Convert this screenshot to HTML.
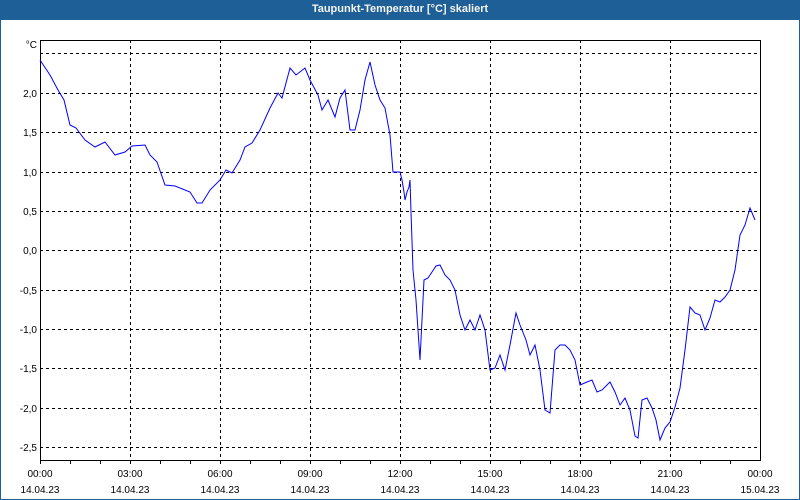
<!DOCTYPE html>
<html><head><meta charset="utf-8"><style>
body{margin:0;width:800px;height:500px;overflow:hidden;background:#fff;font-family:"Liberation Sans",sans-serif}
#t{position:absolute;left:0;top:0;width:800px;height:20px;background:#1d5f96;color:#f4f4f4;font-weight:bold;font-size:11px;line-height:19px;text-align:center}
#b{position:absolute;left:0;top:0;width:798px;height:498px;border:1px solid #1d5f96}
svg{position:absolute;left:0;top:0}
text{font-family:"Liberation Sans",sans-serif;font-size:10px;fill:#000}
</style></head><body>
<div id="b"></div>
<svg width="800" height="500">
<g stroke="#000" stroke-dasharray="3,3" stroke-width="1">
<path d="M40 53.5H760M40 93.5H760M40 132.5H760M40 172.5H760M40 211.5H760M40 250.5H760M40 290.5H760M40 329.5H760M40 368.5H760M40 408.5H760M40 447.5H760"/>
<path d="M130.5 40V460M220.5 40V460M310.5 40V460M400.5 40V460M490.5 40V460M580.5 40V460M670.5 40V460"/>
</g>
<path d="M40.5 40V460.5H760.5V40M40 40.5H760" fill="none" stroke="#000"/>
<path d="M70.5 460v4M100.5 460v4M130.5 460v4M160.5 460v4M190.5 460v4M220.5 460v4M250.5 460v4M280.5 460v4M310.5 460v4M340.5 460v4M370.5 460v4M400.5 460v4M430.5 460v4M460.5 460v4M490.5 460v4M520.5 460v4M550.5 460v4M580.5 460v4M610.5 460v4M640.5 460v4M670.5 460v4M700.5 460v4M730.5 460v4M40.5 460v4" stroke="#000"/>
<g text-anchor="end">
<text x="37" y="48">°C</text>
<text x="37" y="97">2,0</text><text x="37" y="136">1,5</text><text x="37" y="176">1,0</text><text x="37" y="215">0,5</text><text x="37" y="254">0,0</text><text x="37" y="294">-0,5</text><text x="37" y="333">-1,0</text><text x="37" y="372">-1,5</text><text x="37" y="412">-2,0</text><text x="37" y="451">-2,5</text>
</g>
<g text-anchor="middle">
<text x="40" y="477">00:00</text><text x="130" y="477">03:00</text><text x="220" y="477">06:00</text><text x="310" y="477">09:00</text><text x="400" y="477">12:00</text><text x="490" y="477">15:00</text><text x="580" y="477">18:00</text><text x="670" y="477">21:00</text><text x="760" y="477">00:00</text>
<text x="40" y="493">14.04.23</text><text x="130" y="493">14.04.23</text><text x="220" y="493">14.04.23</text><text x="310" y="493">14.04.23</text><text x="400" y="493">14.04.23</text><text x="490" y="493">14.04.23</text><text x="580" y="493">14.04.23</text><text x="670" y="493">14.04.23</text><text x="760" y="493">15.04.23</text>
</g>
<polyline fill="none" stroke="#0000ff" stroke-width="1" points="40,60 50,75 58,90 64,100 70,125 76,128 85,140 95,147 105,142 115,155 125,152 132,146 145,145 150,155 157,162 165,185 175,186 190,192 197,203 202,203 210,190 220,180 226,170 232,173 240,160 245,147 252,143 260,130 270,108 278,93 282,98 290,68 296,75 305,68 310,80 318,95 322,110 328,100 335,117 340,98 345,90 350,130 355,130 360,110 365,80 370,62 375,85 380,100 385,108 390,135 393,172 400,172 402,180 404,192 405,200 407,192 409,187 410,180 411,212 413,270 416,300 418,330 420,360 422,320 424,280 428,278 432,272 436,266 440,265 445,275 450,280 455,290 460,315 465,330 470,320 475,330 480,315 485,330 490,370 495,368 500,355 505,370 510,345 516,313 520,325 526,340 530,355 535,345 540,370 545,410 550,413 555,350 560,345 565,345 570,350 575,360 580,385 587,382 592,380 597,392 602,390 610,382 615,392 620,405 625,398 630,410 635,436 638,438 642,400 647,398 652,408 656,420 660,440 665,428 670,422 675,407 680,388 685,350 690,307 695,313 700,315 705,330 710,318 715,300 720,302 725,297 730,290 735,270 740,235 745,225 750,208 755,220"/>
</svg>
<div id="t">Taupunkt-Temperatur [°C] skaliert</div>
</body></html>
